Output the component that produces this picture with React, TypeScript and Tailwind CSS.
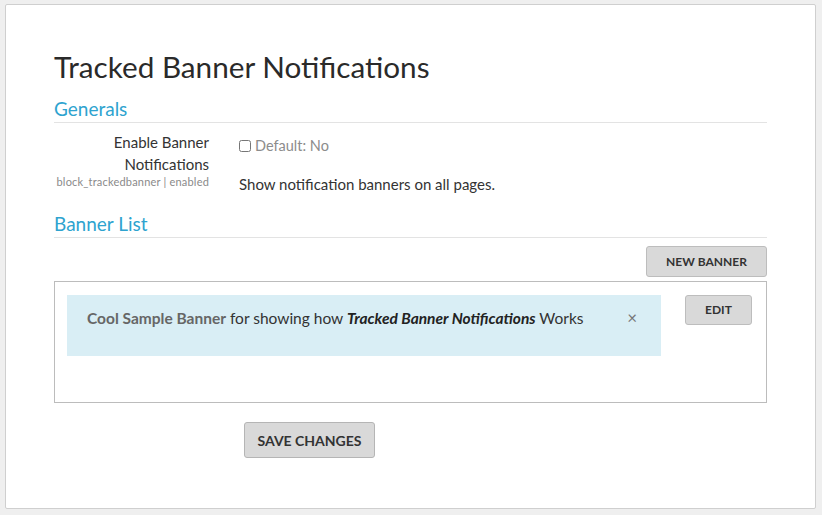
import React from 'react';

const font = { fontFamily: 'Lato, "Liberation Sans", sans-serif' };

const Heading: React.FC<{ children: React.ReactNode }> = ({ children }) => (
  <div className="border-b border-[#e3e3e3] pb-[2px]">
    <h2 className="text-[19px] leading-[22px] text-[#2ea3cf]">{children}</h2>
  </div>
);

const App: React.FC = () => {
  return (
    <div className="w-[822px] h-[515px] bg-[#efefef] pt-[4px] pl-[5px]" style={font}>
      <div className="w-[811px] h-[505px] bg-white border border-[#cfcfcf] rounded-[2px] pl-[48px] pr-[48px] pt-[44px]">
        <h1 className="text-[29.7px] leading-[36px] text-[#2a2a2a] mb-[13px]">Tracked Banner Notifications</h1>

        {/* Generals */}
        <Heading>Generals</Heading>
        <div className="flex mt-[8px]">
          <div className="w-[155px] text-right">
            <div className="text-[15px] leading-[22px] text-[#333]">Enable Banner</div>
            <div className="text-[15px] leading-[22px] text-[#333]">Notifications</div>
            <div className="text-[11px] tracking-[0.2px] leading-[14px] text-[#8a8a8a]">block_trackedbanner | enabled</div>
          </div>
          <div className="ml-[30px] pt-[7px]">
            <label className="flex items-center gap-[4px] text-[14.5px] leading-[16px] text-[#8c8c8c]">
              <input type="checkbox" className="w-[12px] h-[12px] m-0" />
              Default: No
            </label>
            <p className="mt-[20px] text-[15px] leading-[20px] text-[#333]">Show notification banners on all pages.</p>
          </div>
        </div>

        {/* Banner List */}
        <div className="mt-[19px]">
          <Heading>Banner List</Heading>
        </div>
        <div className="flex justify-end mt-[8px]">
          <button className="w-[121px] h-[31px] bg-[#d9d9d9] border border-[#bdbdbd] rounded-[3px] text-[12px] font-bold text-[#333]">
            NEW BANNER
          </button>
        </div>
        <div className="mt-[4px] h-[122px] border border-[#bcbcbc] flex items-start pt-[13px] pl-[12px]">
          <div className="w-[594px] h-[61px] bg-[#d9eef5] flex items-start pt-[13px] pl-[20px] pr-[24px]">
            <p className="flex-1 text-[15.5px] leading-[20px] text-[#333]">
              <span className="font-bold text-[#666]">Cool Sample Banner</span> for showing how{' '}
              <span className="font-bold italic text-[#222]">Tracked Banner Notifications</span> Works
            </p>
            <span className="text-[17px] leading-[20px] text-[#777]">×</span>
          </div>
          <button className="ml-[24px] w-[67px] h-[30px] bg-[#d9d9d9] border border-[#bdbdbd] rounded-[3px] text-[12px] font-bold text-[#333]">
            EDIT
          </button>
        </div>

        <div className="mt-[19px] pl-[190px]">
          <button className="w-[131px] h-[36px] bg-[#d9d9d9] border border-[#b5b5b5] rounded-[3px] text-[14px] font-bold text-[#333]">
            SAVE CHANGES
          </button>
        </div>
      </div>
    </div>
  );
};

export default App;
